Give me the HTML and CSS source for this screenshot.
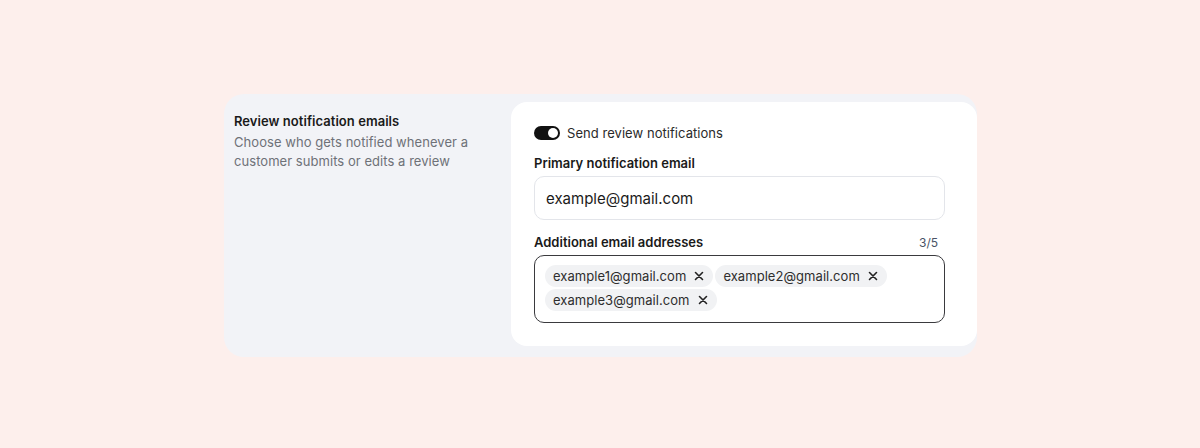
FILE: index.html
```html
<!DOCTYPE html>
<html>
<head>
<meta charset="utf-8">
<link rel="stylesheet" href="styles.css">
</head>
<body>
<div class="page">
  <section class="settings">
    <div class="intro">
      <h2 class="title">Review notification emails</h2>
      <p class="desc">Choose who gets notified whenever a customer submits or edits a review</p>
    </div>
    <div class="panel">
      <label class="toggle-row">
        <span class="toggle"><span class="knob"></span></span>
        <span class="toggle-label">Send review notifications</span>
      </label>
      <div class="field">
        <div class="label">Primary notification email</div>
        <div class="input">example@gmail.com</div>
      </div>
      <div class="field field-tags">
        <div class="label-row">
          <span class="label">Additional email addresses</span>
          <span class="count">3/5</span>
        </div>
        <div class="tags">
          <span class="chip">example1@gmail.com <svg class="x" viewBox="0 0 10 10"><path d="M1.5 1.5L8.5 8.5M8.5 1.5L1.5 8.5"/></svg></span>
          <span class="chip">example2@gmail.com <svg class="x" viewBox="0 0 10 10"><path d="M1.5 1.5L8.5 8.5M8.5 1.5L1.5 8.5"/></svg></span>
          <span class="chip">example3@gmail.com <svg class="x" viewBox="0 0 10 10"><path d="M1.5 1.5L8.5 8.5M8.5 1.5L1.5 8.5"/></svg></span>
        </div>
      </div>
    </div>
  </section>
</div>
</body>
</html>
```

FILE: styles.css
```css
* { box-sizing: border-box; }
html, body { margin: 0; padding: 0; }
body {
  background: #fdefec;
  font-family: Inter, "Noto Sans", sans-serif;
  color: #1f1f1f;
  width: 1200px;
  height: 448px;
}
.page {
  padding: 94px 0 0 224px;
}
.settings {
  width: 753px;
  background: #f2f3f7;
  border-radius: 20px;
  display: flex;
  padding: 8px 0 11px 10px;
}
.intro {
  flex: 0 0 277px;
  padding-top: 9px;
}
.title {
  margin: 0;
  font-size: 13px;
  font-weight: 600;
  line-height: 20px;
  color: #1a1a1a;
  letter-spacing: 0.05px;
}
.desc {
  margin: 2px 0 0;
  font-size: 13px;
  line-height: 19px;
  color: #6e7178;
  width: 250px;
  letter-spacing: 0.05px;
}
.panel {
  flex: 1;
  background: #fff;
  border-radius: 16px;
  padding: 21px 32px 23px 23px;
}
.toggle-row {
  display: flex;
  align-items: center;
  gap: 7px;
  height: 20px;
}
.toggle {
  width: 26px;
  height: 14px;
  border-radius: 7px;
  background: #111;
  position: relative;
  flex: 0 0 auto;
}
.knob {
  position: absolute;
  right: 2px;
  top: 2px;
  width: 10px;
  height: 10px;
  border-radius: 50%;
  background: #fff;
}
.toggle-label {
  font-size: 13px;
  color: #2a2a2a;
  letter-spacing: 0.05px;
}
.field { margin-top: 10px; }
.label {
  font-size: 13px;
  font-weight: 600;
  line-height: 20px;
  color: #1a1a1a;
}
.input {
  margin-top: 3px;
  height: 44px;
  border: 1px solid #e3e5ea;
  border-radius: 10px;
  padding: 0 11px;
  display: flex;
  align-items: center;
  font-size: 15px;
  color: #1a1a1a;
}
.field-tags { margin-top: 12px; }
.label-row {
  display: flex;
  justify-content: space-between;
  align-items: center;
  padding-right: 7px;
}
.count {
  font-size: 12px;
  color: #4a5366;
}
.tags {
  margin-top: 3px;
  border: 1px solid #3a3a3e;
  border-radius: 10px;
  padding: 9px 10px 10px 10px;
  display: flex;
  flex-wrap: wrap;
  gap: 2px;
  min-height: 68px;
  align-content: flex-start;
}
.chip {
  display: inline-flex;
  align-items: center;
  gap: 8px;
  height: 22px;
  padding: 0 9px 0 8px;
  background: #f1f2f4;
  border-radius: 11px;
  font-size: 13px;
  color: #2e2e2e;
  letter-spacing: 0.05px;
}
.x {
  width: 10px;
  height: 10px;
  stroke: #222;
  stroke-width: 1.6;
  stroke-linecap: round;
  fill: none;
}
```
